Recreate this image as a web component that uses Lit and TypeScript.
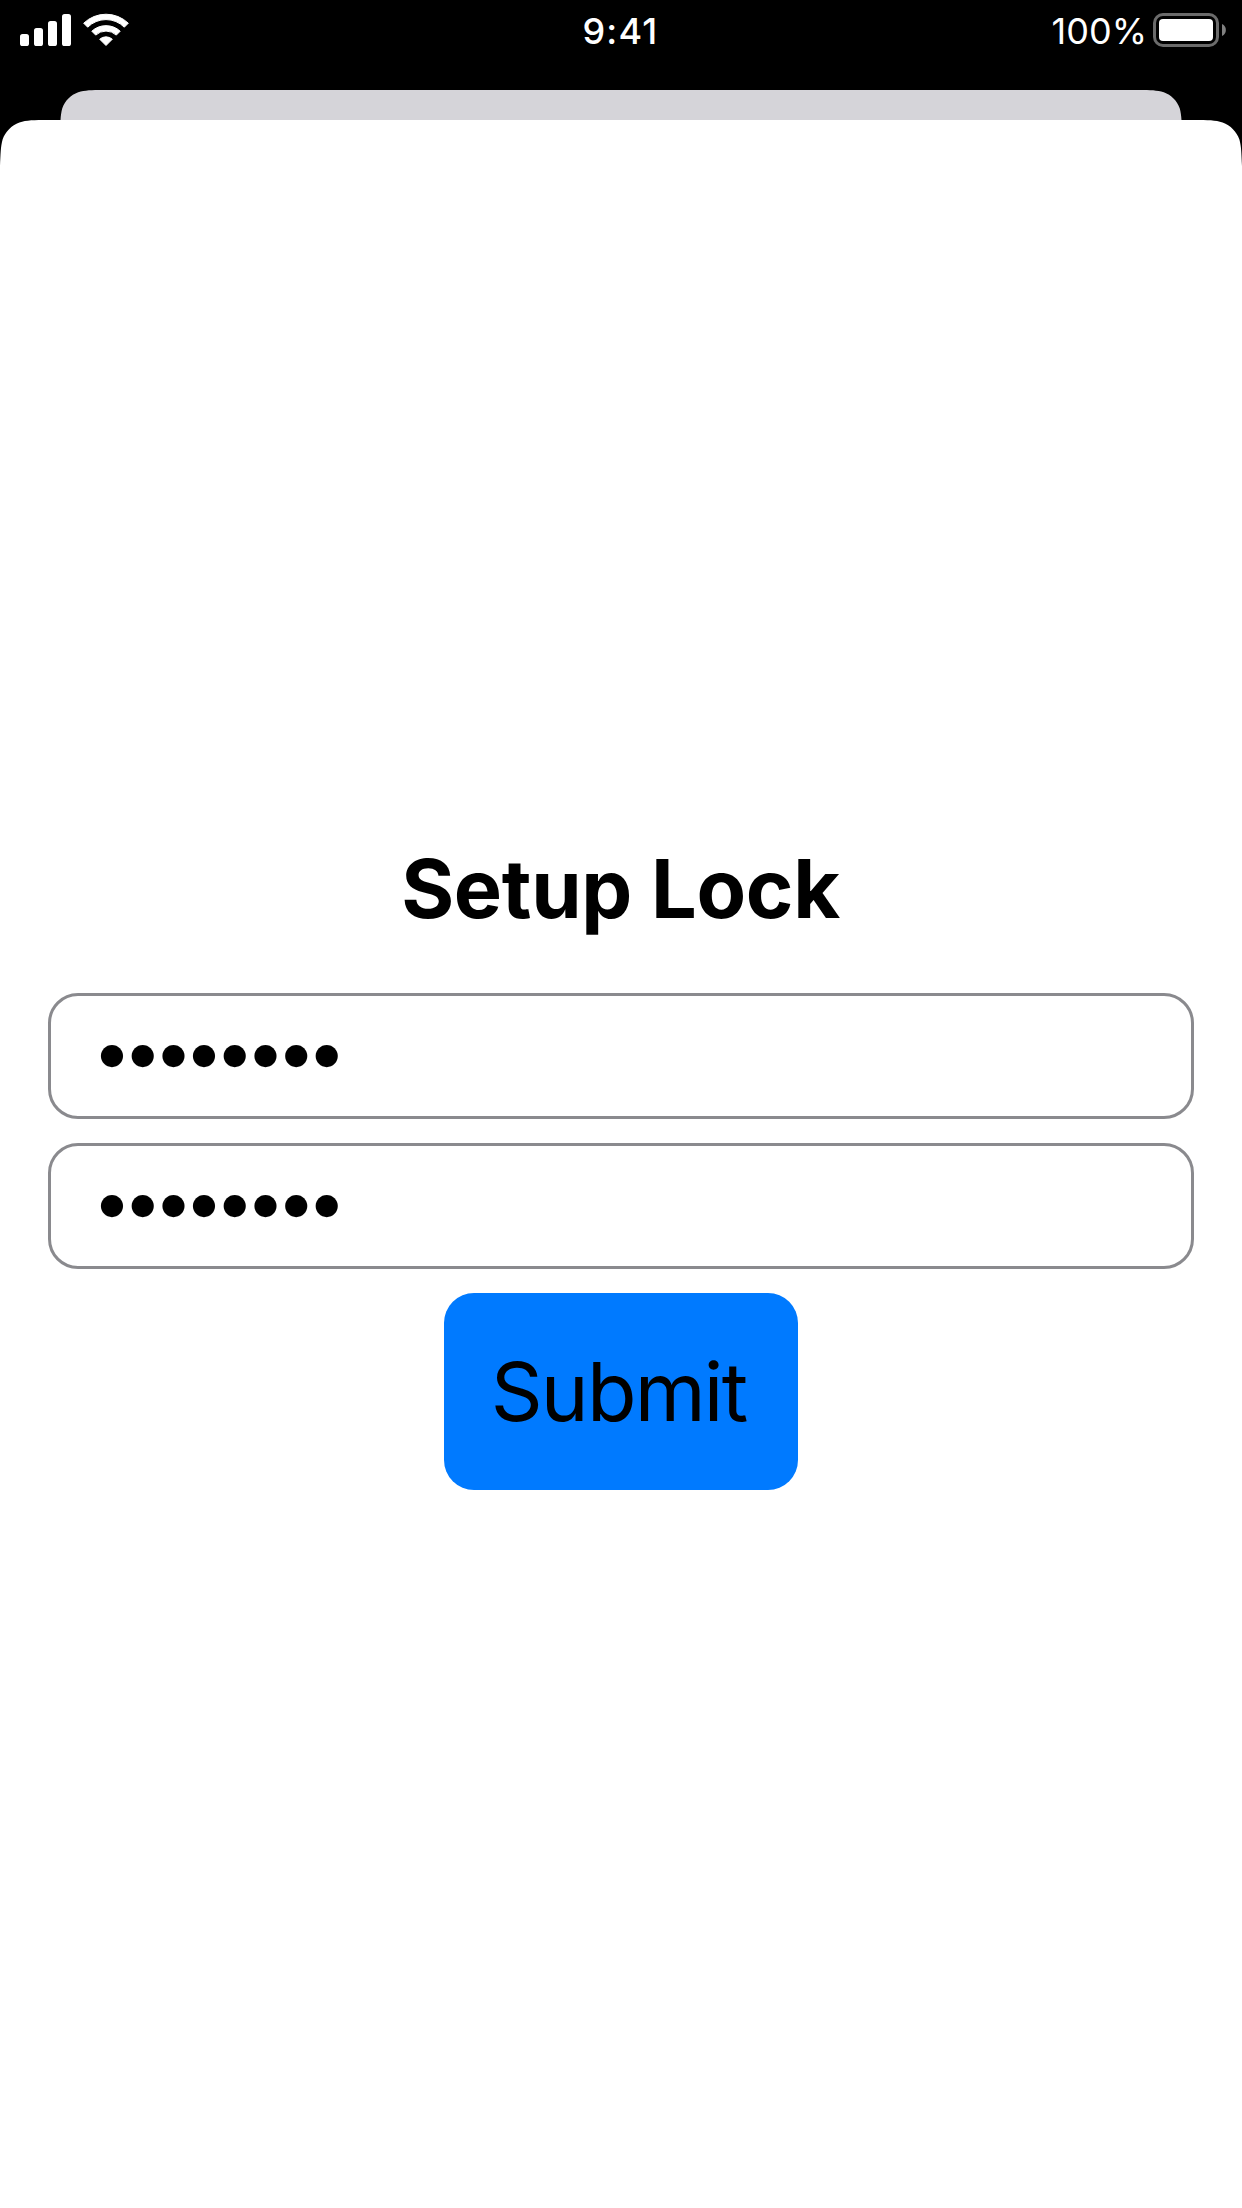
import { LitElement, html, css } from "lit";
import { customElement, property, state } from "lit/decorators.js";

@customElement("status-bar")
class StatusBar extends LitElement {
  @property() time = "";
  @property() charge = "";

  static styles = css`
    :host {
      display: grid;
      grid-template-columns: 1fr auto 1fr;
      align-items: center;
      box-sizing: border-box;
      height: 60px;
      padding: 0 16px;
      color: #fff;
      font-family: Inter, "Liberation Sans", sans-serif;
      font-size: 36px;
      line-height: 60px;
    }
    svg { display: block; }
    .radio { display: flex; gap: 12px; margin-left: 4px; }
    .time { padding: 2px 1px 0 0; font-weight: 500; letter-spacing: 1.2px; line-height: 58px; }
    .power { display: flex; justify-content: flex-end; gap: 6px; }
    .charge { padding-top: 1px; font-weight: 400; letter-spacing: 0; line-height: 60px; height: 59px; }
  `;

  render() {
    return html`
      <div class="radio">
        <svg width="51" height="60" viewBox="20 0 51 60" fill="#fff">
          <rect x="20" y="34" width="9" height="12" rx="2.6" />
          <rect x="34" y="28" width="9" height="18" rx="2.6" />
          <rect x="48" y="21" width="9" height="25" rx="2.6" />
          <rect x="62" y="14" width="9" height="32" rx="2.6" />
        </svg>
        <svg width="46" height="60" viewBox="83 0 46 60" fill="#fff" stroke="#fff" stroke-width="1" stroke-linejoin="round">
          <path d="M83.7 23.2A32.2 32.2 0 0 1 128.3 23.2L124.3 27.2A25.8 25.8 0 0 0 87.7 27.2Z" />
          <path d="M91.8 31.2A20.9 20.9 0 0 1 120.2 31.2L116.3 35.1A15.2 15.2 0 0 0 95.7 35.1Z" />
          <path d="M99.7 39.2A9.6 9.6 0 0 1 112.3 39.2L106 45.5Z" />
        </svg>
      </div>
      <div class="time">${this.time}</div>
      <div class="power">
        <span class="charge">${this.charge}</span>
        <svg width="73" height="60" viewBox="1153 0 73 60">
          <rect x="1154.5" y="14.5" width="63" height="31" rx="8.5" fill="none" stroke="#6b6b6b" stroke-width="3" />
          <rect x="1159" y="19" width="54" height="22" rx="4" fill="#fff" />
          <path d="M1222 24A6.6 6.6 0 0 1 1222 36Z" fill="#808080" />
        </svg>
      </div>
    `;
  }
}

@customElement("lock-form")
class LockForm extends LitElement {
  @state() private password = "password";
  @state() private confirmation = "password";

  static styles = css`
    :host {
      display: flex;
      flex-direction: column;
      align-items: center;
      gap: 24px;
      padding: 0 48px;
      font-family: Inter, "Liberation Sans", sans-serif;
      color: #000;
    }
    .title {
      margin: 0 0 30px;
      padding-right: 1px;
      font-size: 81px;
      font-weight: 700;
      line-height: 100px;
      letter-spacing: -0.3px;
    }
    .field {
      box-sizing: border-box;
      width: 100%;
      height: 126px;
      margin: 0;
      padding: 0 48px 10px 41px;
      border: 3px solid #8a8a8e;
      border-radius: 30px;
      outline: none;
      background: #fff;
      color: #000;
      font-family: Inter, sans-serif;
      font-size: 71px;
      letter-spacing: -9.25px;
    }
    .submit {
      width: 354px;
      height: 197px;
      padding: 0 5px 0 0;
      border: 0;
      border-radius: 30px;
      background: #007aff;
      color: #000;
      font-family: inherit;
      font-size: 81px;
      font-weight: 400;
      letter-spacing: -1.8px;
    }
  `;

  render() {
    return html`
      <h1 class="title">Setup Lock</h1>
      <input class="field" type="password" .value=${this.password} />
      <input class="field" type="password" .value=${this.confirmation} />
      <button class="submit" type="button">Submit</button>
    `;
  }
}

@customElement("app-root")
class AppRoot extends LitElement {
  static styles = css`
    :host {
      display: flex;
      flex-direction: column;
      height: 2208px;
      overflow: hidden;
      background: #000;
    }
    .edge { display: block; flex: none; }
    .back { margin: 30px 0 0 60px; }
    .sheet { flex: 1; padding-top: 673px; background: #fff; }
  `;

  render() {
    return html`
      <status-bar time="9:41" charge="100%"></status-bar>
      <svg class="edge back" width="1122" height="30" viewBox="0 0 1122 30">
        <path fill="#d5d4d9" d="M0 42.8C0.4 31.5 0.4 25 2.3 18.2C4.9 10.8 10.8 4.9 18.2 2.3C25 0.2 31.5 0 42.8 0H1079.2C1090.5 0 1097 0.2 1103.8 2.3C1111.2 4.9 1117.1 10.8 1119.7 18.2C1121.6 25 1121.6 31.5 1122 42.8Z" />
      </svg>
      <svg class="edge" width="1242" height="46" viewBox="0 0 1242 46">
        <path fill="#fff" d="M0 46C0.6 34 0.6 26.5 2.6 19.4C5.4 11.4 11.4 5.4 19.4 2.4C26.5 0.2 34 0 48 0H1194C1208 0 1215.5 0.2 1222.6 2.4C1230.6 5.4 1236.6 11.4 1239.4 19.4C1241.4 26.5 1241.4 34 1242 46Z" />
      </svg>
      <div class="sheet"><lock-form></lock-form></div>
    `;
  }
}
